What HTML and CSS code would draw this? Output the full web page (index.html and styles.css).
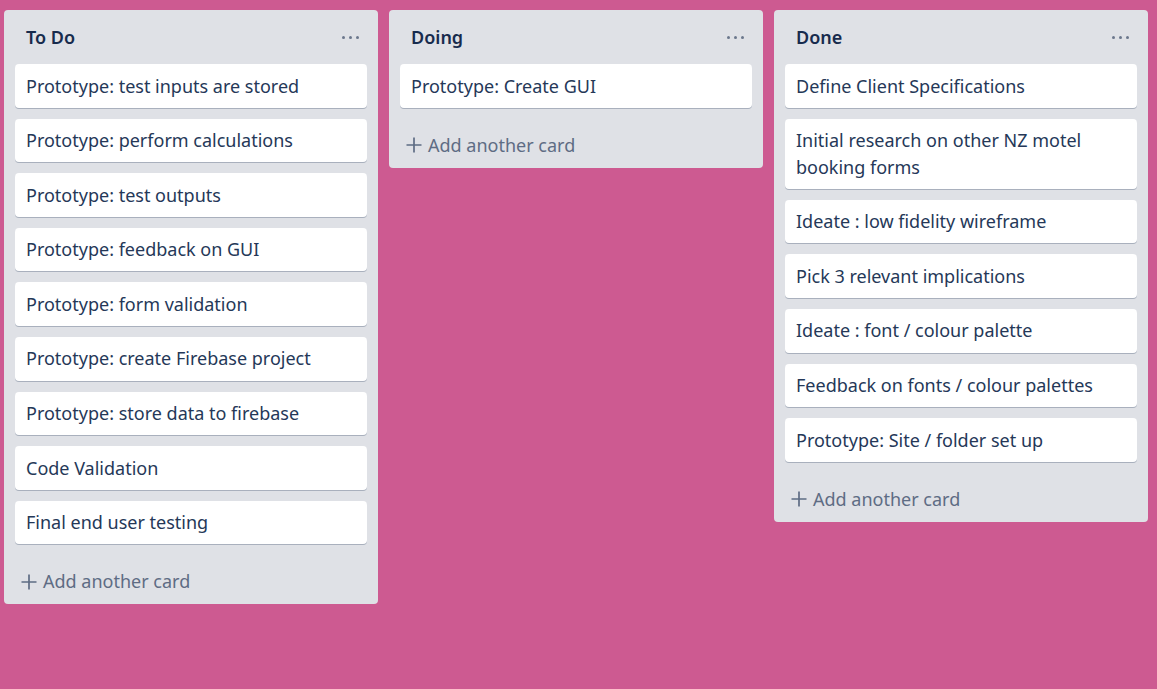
FILE: index.html
```html
<!DOCTYPE html>
<html>
<head>
<meta charset="utf-8">
<link rel="stylesheet" href="styles.css">
</head>
<body>
<div class="board">
  <div class="list">
    <div class="list-header"><h2 class="list-title">To Do</h2><span class="dots"><i></i><i></i><i></i></span></div>
    <div class="cards">
      <div class="card">Prototype: test inputs are stored</div>
      <div class="card">Prototype: perform calculations</div>
      <div class="card">Prototype: test outputs</div>
      <div class="card">Prototype: feedback on GUI</div>
      <div class="card">Prototype: form validation</div>
      <div class="card">Prototype: create Firebase project</div>
      <div class="card">Prototype: store data to firebase</div>
      <div class="card">Code Validation</div>
      <div class="card">Final end user testing</div>
    </div>
    <div class="composer"><svg class="plus" viewBox="0 0 16 16" width="16" height="16"><path d="M8 0.5v15M0.5 8h15" stroke="#5e6c84" stroke-width="1.7" fill="none"/></svg><span>Add another card</span></div>
  </div>
  <div class="list">
    <div class="list-header"><h2 class="list-title">Doing</h2><span class="dots"><i></i><i></i><i></i></span></div>
    <div class="cards">
      <div class="card">Prototype: Create GUI</div>
    </div>
    <div class="composer"><svg class="plus" viewBox="0 0 16 16" width="16" height="16"><path d="M8 0.5v15M0.5 8h15" stroke="#5e6c84" stroke-width="1.7" fill="none"/></svg><span>Add another card</span></div>
  </div>
  <div class="list">
    <div class="list-header"><h2 class="list-title">Done</h2><span class="dots"><i></i><i></i><i></i></span></div>
    <div class="cards">
      <div class="card">Define Client Specifications</div>
      <div class="card">Initial research on other NZ motel booking forms</div>
      <div class="card">Ideate : low fidelity wireframe</div>
      <div class="card">Pick 3 relevant implications</div>
      <div class="card">Ideate : font / colour palette</div>
      <div class="card">Feedback on fonts / colour palettes</div>
      <div class="card">Prototype: Site / folder set up</div>
    </div>
    <div class="composer"><svg class="plus" viewBox="0 0 16 16" width="16" height="16"><path d="M8 0.5v15M0.5 8h15" stroke="#5e6c84" stroke-width="1.7" fill="none"/></svg><span>Add another card</span></div>
  </div>
</div>
</body>
</html>
```

FILE: styles.css
```css
html, body {
  margin: 0;
  padding: 0;
}
body {
  background: #cd5a91;
  font-family: "Noto Sans", "Open Sans", sans-serif;
  font-size: 18px;
  color: #172b4d;
  height: 689px;
  overflow: hidden;
}
.board {
  display: flex;
  align-items: flex-start;
  gap: 11px;
  padding: 10px 4px;
}
.list {
  width: 374px;
  flex: 0 0 374px;
  background: #dfe1e6;
  border-radius: 4px;
  display: flex;
  flex-direction: column;
}
.list-header {
  display: flex;
  align-items: center;
  justify-content: space-between;
  padding: 13px 19px 13px 22px;
  height: 28px;
}
.list-title {
  margin: 0;
  font-size: 18px;
  font-weight: 600;
  line-height: 28px;
  color: #172b4d;
}
.dots {
  display: flex;
  gap: 4px;
}
.dots i {
  display: block;
  width: 3px;
  height: 3px;
  border-radius: 50%;
  background: #6b778c;
}
.cards {
  display: flex;
  flex-direction: column;
  gap: 11px;
  padding: 0 11px;
}
.card {
  background: #fff;
  border-radius: 4px;
  box-shadow: 0 1px 0 rgba(9, 30, 66, 0.25);
  padding: 8.5px 11px;
  line-height: 26.6px;
  color: #253858;
}
.composer {
  display: flex;
  align-items: center;
  gap: 6px;
  margin: 11px 11px 0;
  padding: 13px 6px 9px;
  line-height: 27px;
  color: #5e6c84;
}
.plus {
  display: block;
}
```
